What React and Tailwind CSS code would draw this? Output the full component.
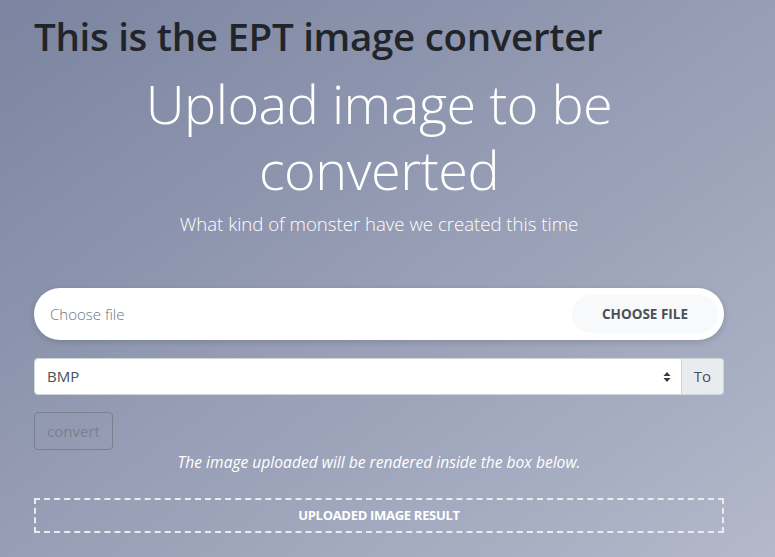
import React from 'react';

export default function App() {
  return (
    <div
      className="min-h-[557px] w-full bg-gradient-to-br from-[#7b84a0] to-[#b3b8ca] text-[#212529]"
      style={{ fontFamily: '"Open Sans", "Noto Sans", sans-serif' }}
    >
      <div className="ml-[34px] w-[690px] pt-[13px]">
        <h1 className="text-[38.5px] font-semibold leading-[1.2] text-[#212529] tracking-[-0.3px]">
          This is the EPT image converter
        </h1>

        <div className="text-center text-white mt-[11px]">
          <h2 className="text-[54px] font-light leading-[66px] tracking-[-0.5px]">
            Upload image to be
            <br />
            converted
          </h2>
          <p className="text-[18.6px] font-light mt-[8px] leading-[28px]">
            What kind of monster have we created this time
          </p>
        </div>

        <div className="mt-[50px] h-[52px] bg-white rounded-full shadow-[0_2px_6px_rgba(0,0,0,0.15)] flex items-center justify-between pl-[16px] pr-[6px]">
          <span className="text-[15px] font-light text-[#6c757d]">Choose file</span>
          <button className="h-[38px] w-[146px] rounded-full bg-[#f8f9fa] text-[13.5px] font-bold text-[#495057] uppercase">
            Choose File
          </button>
        </div>

        <div className="mt-[18px] flex h-[37px]">
          <div className="flex-1 flex items-center justify-between bg-white border border-[#ced4da] rounded-l-[4px] pl-[12px] pr-[10px]">
            <span className="text-[15px] text-[#495057]">BMP</span>
            <svg width="8" height="12" viewBox="0 0 8 12">
              <path d="M4 1 L7.5 5 H0.5 Z" fill="#343a40" />
              <path d="M4 11 L7.5 7 H0.5 Z" fill="#343a40" />
            </svg>
          </div>
          <div className="w-[42px] flex items-center justify-center bg-[#e9ecef] border border-l-0 border-[#ced4da] rounded-r-[4px] text-[15px] text-[#495057]">
            To
          </div>
        </div>

        <button className="mt-[17px] h-[38px] w-[79px] rounded-[4px] border border-[#6c757d] text-[15px] text-[#6c757d] opacity-65 leading-none">
          convert
        </button>

        <p className="text-center text-white italic text-[15.6px] mt-0 leading-[24px]">
          The image uploaded will be rendered inside the box below.
        </p>

        <div className="mt-[24px] h-[35px] border-2 border-dashed border-[#e9ecef] flex items-center justify-center">
          <span className="text-[13px] font-bold text-white uppercase tracking-[-0.3px]">
            Uploaded Image Result
          </span>
        </div>
      </div>
    </div>
  );
}
